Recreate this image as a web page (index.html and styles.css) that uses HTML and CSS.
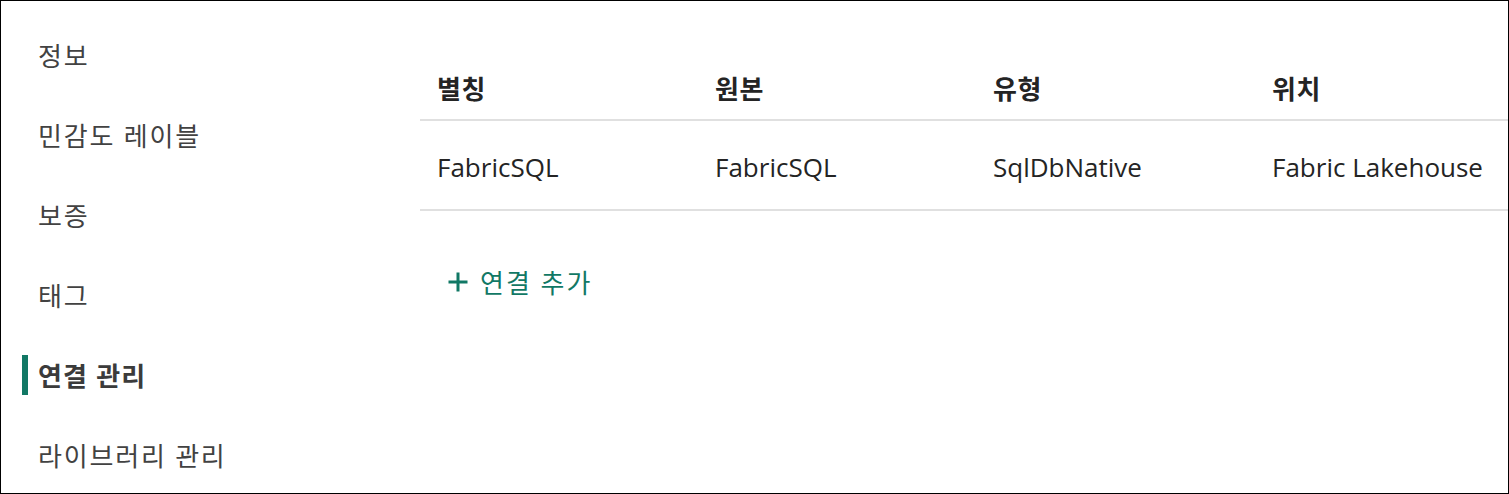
FILE: index.html
```html
<!DOCTYPE html>
<html lang="ko">
<head>
<meta charset="utf-8">
<link rel="stylesheet" href="styles.css">
</head>
<body>
<div class="frame">
  <nav class="sidebar">
    <div class="nav-item">정보</div>
    <div class="nav-item">민감도 레이블</div>
    <div class="nav-item">보증</div>
    <div class="nav-item">태그</div>
    <div class="nav-item active">연결 관리</div>
    <div class="nav-item">라이브러리 관리</div>
  </nav>
  <main class="content">
    <div class="table">
      <div class="row head">
        <div class="cell">별칭</div>
        <div class="cell">원본</div>
        <div class="cell">유형</div>
        <div class="cell">위치</div>
      </div>
      <div class="row body">
        <div class="cell">FabricSQL</div>
        <div class="cell">FabricSQL</div>
        <div class="cell">SqlDbNative</div>
        <div class="cell">Fabric Lakehouse</div>
      </div>
    </div>
    <button class="add-link">
      <svg class="plus" width="22" height="22" viewBox="0 0 22 22"><path d="M11 1.5v19M1.5 11h19" stroke="#117865" stroke-width="3" fill="none"/></svg>
      <span>연결 추가</span>
    </button>
  </main>
</div>
</body>
</html>
```
FILE: styles.css
```css
html, body {
  margin: 0;
  padding: 0;
  background: #fff;
}
.frame {
  box-sizing: border-box;
  width: 1509px;
  height: 494px;
  border: 1px solid #000;
  display: flex;
  overflow: hidden;
  font-family: "Open Sans", "Noto Sans CJK KR", sans-serif;
  color: #242424;
}
.sidebar {
  width: 419px;
  flex: none;
  padding-top: 14px;
}
.nav-item {
  position: relative;
  height: 80px;
  display: flex;
  align-items: center;
  padding-left: 37px;
  font-size: 26px;
  letter-spacing: 1.8px;
  color: #424242;
}
.nav-item.active {
  font-weight: 700;
  color: #3b3b3b;
  letter-spacing: 1.2px;
}
.nav-item.active::before {
  content: "";
  position: absolute;
  left: 21px;
  top: 20px;
  width: 6px;
  height: 40px;
  background: #117865;
}
.content {
  flex: 1;
  padding-top: 55px;
  min-width: 0;
}
.row {
  display: grid;
  grid-template-columns: 278px 278px 279px 1fr;
  border-bottom: 2px solid #e0e0e0;
}
.row.head {
  height: 63px;
  font-weight: 700;
}
.row.head .cell {
  letter-spacing: 0.5px;
}
.row.body {
  height: 88px;
}
.cell {
  display: flex;
  align-items: center;
  padding-left: 17px;
  font-size: 26px;
  white-space: nowrap;
}
.row.body .cell {
  padding-top: 4px;
}
.add-link {
  margin: 51px 0 0 27px;
  display: flex;
  align-items: center;
  gap: 11px;
  border: none;
  background: none;
  padding: 0;
  height: 40px;
  font-family: "Open Sans", "Noto Sans CJK KR", sans-serif;
  font-size: 26px;
  letter-spacing: 2px;
  color: #117865;
  cursor: pointer;
}
```
